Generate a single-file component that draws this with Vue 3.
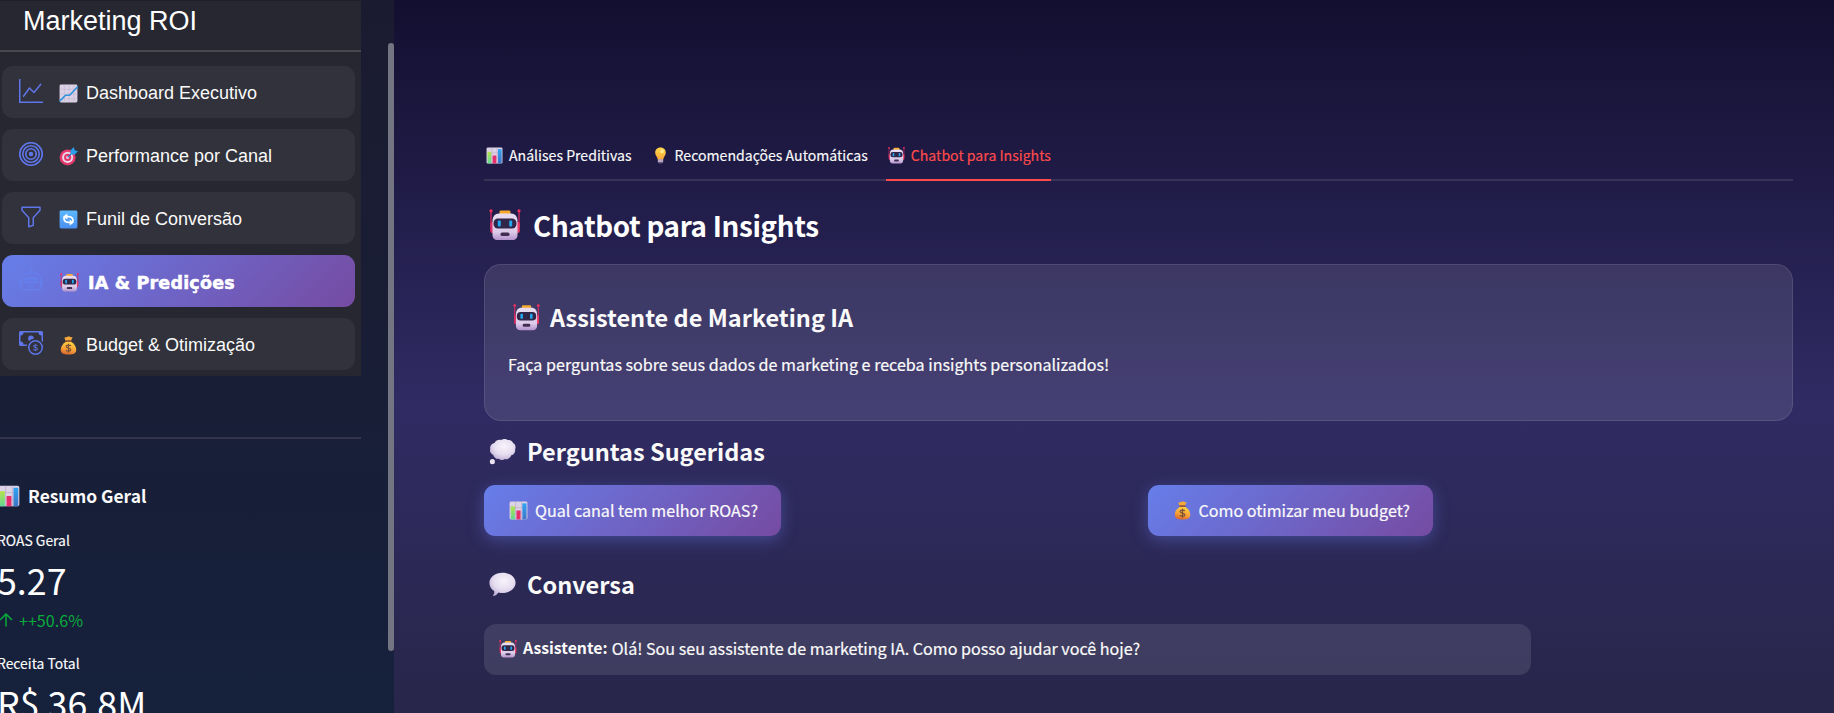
<script setup>
const menu = [
  { icon: 'graph', emoji: 'trend', label: 'Dashboard Executivo' },
  { icon: 'bullseye', emoji: 'dart', label: 'Performance por Canal' },
  { icon: 'funnel', emoji: 'cycle', label: 'Funil de Conversão' },
  { icon: 'robot', emoji: 'bot', label: 'IA & Predições', active: true },
  { icon: 'cash', emoji: 'bag', label: 'Budget & Otimização' },
]
const tabs = [
  { emoji: 'bars', label: 'Análises Preditivas' },
  { emoji: 'bulb', label: 'Recomendações Automáticas' },
  { emoji: 'bot', label: 'Chatbot para Insights', active: true },
]
</script>

<template>
  <div class="app">
    <svg class="defs" aria-hidden="true">
      <defs>
        <linearGradient id="g-head" x1="0" y1="0" x2="0" y2="1"><stop offset="0" stop-color="#e9dcf1" /><stop offset=".7" stop-color="#dccbe9" /><stop offset="1" stop-color="#b493cd" /></linearGradient>
        <linearGradient id="g-green" x1="0" y1="0" x2="0" y2="1"><stop offset="0" stop-color="#b5e34a" /><stop offset="1" stop-color="#5fd694" /></linearGradient>
        <linearGradient id="g-blue" x1="0" y1="0" x2="0" y2="1"><stop offset="0" stop-color="#2fa4f5" /><stop offset="1" stop-color="#3f74c6" /></linearGradient>
        <linearGradient id="g-bulb" x1="0" y1="0" x2="0" y2="1"><stop offset="0" stop-color="#ffd84a" /><stop offset="1" stop-color="#f9a63a" /></linearGradient>
        <linearGradient id="g-bag" x1=".7" y1="0" x2=".4" y2="1"><stop offset="0" stop-color="#ffd23e" /><stop offset=".6" stop-color="#f8a138" /><stop offset="1" stop-color="#d9692f" /></linearGradient>
        <linearGradient id="g-cyc" x1="0" y1="0" x2="0" y2="1"><stop offset="0" stop-color="#5db8ff" /><stop offset="1" stop-color="#4a8ff0" /></linearGradient>
        <radialGradient id="g-cloud" cx=".55" cy=".35" r=".65"><stop offset="0" stop-color="#f7f3fb" /><stop offset=".6" stop-color="#e6def0" /><stop offset="1" stop-color="#c3b3d8" /></radialGradient>
      </defs>
      <symbol id="i-graph" viewBox="0 0 16 16"><path d="M0 0h1v15h15v1H0V0Zm14.817 3.113a.5.5 0 0 1 .07.704l-4.5 5.5a.5.5 0 0 1-.74.037L7.06 6.767l-3.656 5.027a.5.5 0 0 1-.808-.588l4-5.5a.5.5 0 0 1 .758-.06l2.609 2.61 4.15-5.073a.5.5 0 0 1 .704-.07Z" /></symbol>
      <symbol id="i-bullseye" viewBox="0 0 16 16"><g fill="none" stroke="currentColor"><circle cx="8" cy="8" r="7.5" /><circle cx="8" cy="8" r="5.5" /><circle cx="8" cy="8" r="3.5" /></g><circle cx="8" cy="8" r="1.5" /></symbol>
      <symbol id="i-funnel" viewBox="0 0 16 16"><path d="M1.500 1.500A.5.5 0 0 1 2 1h12a.5.5 0 0 1 .5.5v2a.5.5 0 0 1-.128.334L10 8.692V13.500a.5.5 0 0 1-.342.474l-3 1A.5.5 0 0 1 6 14.500V8.692L1.628 3.834A.5.5 0 0 1 1.500 3.500v-2zm1 .5v1.308l4.372 4.858A.5.5 0 0 1 7 8.500v5.306l2-.666V8.500a.5.5 0 0 1 .128-.334L13.500 3.308V2h-11z" /></symbol>
      <symbol id="i-robot" viewBox="0 0 16 16"><path d="M6 12.500a.5.5 0 0 1 .5-.5h3a.5.5 0 0 1 0 1h-3a.5.5 0 0 1-.5-.5ZM3 8.062C3 6.760 4.235 5.765 5.530 5.886a26.580 26.580 0 0 0 4.940 0C11.765 5.765 13 6.760 13 8.062v1.157a.933.933 0 0 1-.765.935c-.845.147-2.340.346-4.235.346-1.895 0-3.390-.2-4.235-.346A.933.933 0 0 1 3 9.219V8.062Zm4.542-.827a.25.25 0 0 0-.217.068l-.92.9a24.767 24.767 0 0 1-1.871-.183.25.25 0 0 0-.068.495c.55.076 1.232.149 2.020.193a.25.25 0 0 0 .189-.071l.754-.736.847 1.710a.25.25 0 0 0 .404.062l.932-.97a25.286 25.286 0 0 0 1.922-.188.25.25 0 0 0-.068-.495c-.538.074-1.207.145-1.980.189a.25.25 0 0 0-.166.076l-.754.785-.842-1.700a.25.25 0 0 0-.182-.135Z" /><path d="M8.500 1.866a1 1 0 1 0-1 0V3h-2A4.500 4.500 0 0 0 1 7.500V8a1 1 0 0 0-1 1v2a1 1 0 0 0 1 1v1a2 2 0 0 0 2 2h10a2 2 0 0 0 2-2v-1a1 1 0 0 0 1-1V9a1 1 0 0 0-1-1v-.5A4.500 4.500 0 0 0 10.500 3h-2V1.866ZM14 7.500V13a1 1 0 0 1-1 1H3a1 1 0 0 1-1-1V7.500A3.500 3.500 0 0 1 5.500 4h5A3.500 3.500 0 0 1 14 7.500Z" /></symbol>
      <symbol id="i-cash" viewBox="0 0 16 16"><path fill-rule="evenodd" d="M11 15a4 4 0 1 0 0-8 4 4 0 0 0 0 8zm5-4a5 5 0 1 1-10 0 5 5 0 0 1 10 0z" /><path d="M9.438 11.944c.047.596.518 1.060 1.363 1.116v.44h.375v-.443c.875-.061 1.386-.529 1.386-1.207 0-.618-.39-.936-1.090-1.100l-.296-.07v-1.200c.376.043.614.248.671.532h.658c-.047-.575-.54-1.024-1.329-1.073V8.500h-.375v.45c-.747.073-1.255.522-1.255 1.158 0 .562.378.92 1.007 1.066l.248.061v1.272c-.384-.058-.639-.27-.696-.563h-.668zm1.360-1.354c-.369-.085-.569-.26-.569-.522 0-.294.216-.514.572-.578v1.100h-.003zm.432.746c.449.104.655.272.655.569 0 .339-.257.571-.709.614v-1.195l.054.012z" /><path d="M1 0a1 1 0 0 0-1 1v8a1 1 0 0 0 1 1h4.083c.058-.344.145-.678.258-1H3a2 2 0 0 0-2-2V3a2 2 0 0 0 2-2h10a2 2 0 0 0 2 2v3.528c.38.34.717.728 1 1.154V1a1 1 0 0 0-1-1H1z" /><path d="M9.998 5.083 10 5a2 2 0 1 0-3.132 1.650 5.982 5.982 0 0 1 3.130-1.567z" /></symbol>

      <symbol id="e-bot" viewBox="0 0 32 32">
        <path d="M2 2v16M30 2v16" stroke="#d42a60" stroke-width="1.300" /><circle cx="2" cy="1.800" r="1.600" fill="#f8305f" /><circle cx="30" cy="1.800" r="1.600" fill="#f8305f" />
        <rect x="1.200" y="13" width="5" height="11" rx="2" fill="#d92e66" /><rect x="25.800" y="13" width="5" height="11" rx="2" fill="#ef3a68" />
        <rect x="10.500" y="1.600" width="11" height="4.500" rx="1.300" fill="#f5a92d" />
        <path d="M10 4.500h12c4 0 6.500 3 6.500 7.500v14c0 3-2 5-5 5h-15c-3 0-5-2-5-5V12c0-4.500 2.500-7.500 6.500-7.500z" fill="url(#g-head)" />
        <rect x="4.500" y="9.500" width="23" height="10" rx="4.500" fill="#322649" />
        <rect x="8.800" y="11.500" width="3" height="6" rx="1" fill="#23a8ef" /><rect x="20.200" y="11.500" width="3" height="6" rx="1" fill="#23a8ef" />
        <rect x="11.500" y="23.500" width="9" height="3.600" rx="1.600" fill="#402f50" />
      </symbol>
      <symbol id="e-bars" viewBox="0 0 32 32"><rect x="1" y="1" width="30" height="30" rx="2.500" fill="#dcd2e5" /><path d="M1 11h30M1 21h30M11 1v30M21 1v30" stroke="#b9a9c9" stroke-width="1" /><path d="M3 9h7v22H3z" fill="url(#g-green)" /><path d="M12.500 16h7v15h-7z" fill="#e62e6c" /><path d="M22.500 4h7v27h-7z" fill="url(#g-blue)" /></symbol>
      <symbol id="e-trend" viewBox="0 0 32 32"><rect x="1" y="1" width="30" height="30" rx="2.500" fill="#dcd2e5" /><path d="M1 9h30M1 17h30M1 25h30M9 1v30M17 1v30M25 1v30" stroke="#c3b4d0" stroke-width="1" /><path d="M2 28l9-9h7L31 5" fill="none" stroke="#2f92dc" stroke-width="2.800" stroke-linejoin="round" stroke-linecap="round" /></symbol>
      <symbol id="e-dart" viewBox="0 0 32 32"><circle cx="14.500" cy="17.500" r="13.500" fill="#e5396b" /><circle cx="14.500" cy="17.500" r="9.300" fill="#ead8ec" /><circle cx="14.500" cy="17.500" r="6" fill="#e5396b" /><circle cx="14.500" cy="17.500" r="2.500" fill="#ead8ec" /><path d="M14.500 17.500L24 8" stroke="#2878be" stroke-width="2" /><path d="M20 12l-.8-6L25 0l1.500 5.500L32 7l-6 6z" fill="#2b9deb" /></symbol>
      <symbol id="e-cycle" viewBox="0 0 32 32"><rect x="1" y="1" width="30" height="30" rx="2.500" fill="url(#g-cyc)" /><g fill="none" stroke="#fff" stroke-width="3"><path d="M23 21c2-6-1-10-7-10h-3" /><path d="M9 11c-2 6 1 10 7 10h3" /></g><path d="M14 6v10l-7-5zM18 16v10l7-5z" fill="#fff" /></symbol>
      <symbol id="e-bag" viewBox="0 0 32 32"><path d="M11 8L9 3c3-2 4 0 6-2 3-1 4 1 8 1l-3 6z" fill="#f7a83a" /><path d="M11 7h10v3H11z" fill="#9a5a35" /><path d="M11 10h10c5 3 8 8 8 13 0 6-4 8-13 8S3 29 3 23c0-5 3-10 8-13z" fill="url(#g-bag)" /><path d="M16 13v15M20 17c-1-2-8-2.500-8 .6 0 3.500 8 2 8 5.700 0 3-7 3-8.300.2" fill="none" stroke="#79523a" stroke-width="2" /></symbol>
      <symbol id="e-bulb" viewBox="0 0 32 32"><path d="M16 1c6.500 0 10 4.500 10 10 0 5-4 7-5 13H11C10 18 6 16 6 11 6 5.500 9.500 1 16 1z" fill="url(#g-bulb)" /><ellipse cx="19" cy="8" rx="3.500" ry="4" fill="#ffe98a" /><rect x="11" y="23" width="10" height="6" rx="1" fill="#b9a7c4" /><path d="M12.500 29h7l-1.500 2.500h-4z" fill="#5d4b68" /></symbol>
      <symbol id="e-thought" viewBox="0 0 32 32"><path d="M6.500 6C8 2.500 12 1.500 14.500 2.500c2-1.800 6-1.500 7.500 0 3-.8 6 1 6.500 3.500 3 1.500 3.500 5 2.500 7 .5 4-1.500 7-4.500 7.500-1.500 3.800-5 5.500-7.500 4.500-2.500 1.800-5.500 1.500-7.500-.3-3 .5-5.500-1.700-6.500-4.700-3-1-4.500-4.500-3.500-7C.5 9.500 3.500 6.300 6.500 6z" fill="url(#g-cloud)" /><circle cx="4" cy="28" r="3" fill="#eae3f2" /></symbol>
      <symbol id="e-speech" viewBox="0 0 32 32"><path d="M16 2c9 0 15.500 5.500 15.500 12S25 26 16 26c-2 0-3.500-.2-5-.6-1 2.200-3 3.700-5.500 4.100-.6 0-.8-.5-.4-1 1-1.500 1.400-3 1-4.800C2.500 21.500.5 18.300.5 14 .500 7.500 7 2 16 2z" fill="url(#g-cloud)" /></symbol>
    </svg>

    <aside class="sidebar">
      <nav class="menu">
        <div class="brand">Marketing ROI</div>
        <ul>
          <li v-for="m in menu" :key="m.label" :class="{ active: m.active }">
            <svg class="icon"><use :href="'#i-' + m.icon" /></svg>
            <svg class="emo"><use :href="'#e-' + m.emoji" /></svg>
            <span>{{ m.label }}</span>
          </li>
        </ul>
      </nav>
      <div class="rule"></div>
      <section class="summary">
        <h4><svg><use href="#e-bars" /></svg><span>Resumo Geral</span></h4>
        <div class="lbl">ROAS Geral</div>
        <div class="val">5.27</div>
        <div class="delta">
          <svg viewBox="0 0 14 14"><path d="M7 13.500V1M1 7l6-6 6 6" fill="none" stroke="currentColor" stroke-width="1.500" /></svg>
          <span>++50.6%</span>
        </div>
        <div class="lbl second">Receita Total</div>
        <div class="val">R$ 36.8M</div>
      </section>
      <div class="thumb"></div>
    </aside>

    <main>
      <div class="tabs">
        <div v-for="t in tabs" :key="t.label" class="tab" :class="{ active: t.active }">
          <svg><use :href="'#e-' + t.emoji" /></svg><span>{{ t.label }}</span>
        </div>
      </div>
      <h2><svg><use href="#e-bot" /></svg><span>Chatbot para Insights</span></h2>
      <section class="card">
        <h3><svg><use href="#e-bot" /></svg><span>Assistente de Marketing IA</span></h3>
        <p>Faça perguntas sobre seus dados de marketing e receba insights personalizados!</p>
      </section>
      <h3 class="ask"><svg><use href="#e-thought" /></svg><span>Perguntas Sugeridas</span></h3>
      <div class="actions">
        <div><button><svg><use href="#e-bars" /></svg><span>Qual canal tem melhor ROAS?</span></button></div>
        <div><button><svg><use href="#e-bag" /></svg><span>Como otimizar meu budget?</span></button></div>
      </div>
      <h3 class="talk"><svg><use href="#e-speech" /></svg><span>Conversa</span></h3>
      <div class="msg"><svg><use href="#e-bot" /></svg><b>Assistente:</b><span>Olá! Sou seu assistente de marketing IA. Como posso ajudar você hoje?</span></div>
    </main>
  </div>
</template>

<style>
html, body { margin: 0; height: 713px; overflow: hidden; }
</style>

<style scoped>
* { box-sizing: border-box; }
.app { display: flex; width: 1834px; height: 713px; overflow: hidden; color: #fafafa; font-family: "Noto Sans CJK SC", "Noto Sans", sans-serif; font-size: 16.1px; white-space: nowrap; }
.defs { position: absolute; width: 0; height: 0; }
svg { flex: none; display: block; }
h2, h3, h4, p, ul { margin: 0; padding: 0; list-style: none; }

.sidebar { position: relative; width: 394px; height: 713px; flex: none; overflow: hidden; background: linear-gradient(180deg, #1b1b30 0, #16213c 100%); }
.thumb { position: absolute; right: 0; top: 43px; width: 6px; height: 608px; border-radius: 3px; background: #747582; }
.menu { width: 361px; height: 376px; background: #262730; font-family: "Liberation Sans", Arial, sans-serif; border-top: 1px solid #20202c; }
.brand { height: 51px; padding-left: 23px; line-height: 40px; font-size: 27px; color: #fff; border-bottom: 2px solid #46474f; }
.menu ul { padding: 14px 6px 0 2px; display: flex; flex-direction: column; gap: 11px; }
.menu li { height: 52px; border-radius: 11px; background: #31323b; display: flex; align-items: center; padding-left: 17px; color: #fafafa; font-size: 18px; }
.icon { width: 24px; height: 24px; margin-top: -3px; fill: #5f75ea; color: #5f75ea; stroke-width: 1.1; }
.active .icon { fill: #667eea; }
.emo { width: 19px; height: 19px; margin: 2px 8px 0 16px; }
.menu li span { line-height: 24px; margin-top: 1px; }
.menu li.active { background: linear-gradient(135deg, #667eea 0%, #764ba2 100%); }
.active .emo { margin-left: 17px; margin-right: 9px; }
.menu li.active span { font-family: "DejaVu Sans", "Liberation Sans", sans-serif; font-weight: 700; font-size: 17.5px; letter-spacing: .2px; margin-top: 3px; color: #fff; -webkit-text-stroke: .5px #fff; }

.rule { width: 361px; height: 2px; margin-top: 61px; background: #33354f; }
.summary { padding-top: 43px; margin-left: -3px; }
h4 { display: flex; align-items: center; height: 28px; font-size: 17.4px; font-weight: 700; line-height: 28px; }
h4 svg { width: 22px; height: 22px; margin: 0 8px 0 1px; }
.lbl { height: 22px; line-height: 22px; font-size: 13.9px; margin-top: 19px; -webkit-text-stroke: .15px; }
.val { height: 48px; line-height: 48px; font-size: 35.8px; color: #fff; margin-top: 4px; }
.delta { display: flex; align-items: center; height: 26px; line-height: 26px; color: #09ab3b; margin-top: 4px; }
.delta svg { width: 14px; height: 14px; margin: 0 6px 0 2px; }
.lbl.second { margin-top: 19px; }

main { flex: 1; height: 713px; padding: 140px 41px 0 90px; background: linear-gradient(180deg, #130f30 0, #302b63 405px, #28264a 713px); }
.tabs { display: flex; height: 41px; border-bottom: 2px solid #383257; }
.tab { display: flex; align-items: center; height: 41px; padding-bottom: 9px; font-size: 14.1px; line-height: 30px; border-bottom: 2px solid transparent; margin-right: 18px; -webkit-text-stroke: .15px; }
.tab svg { width: 17px; height: 17px; margin: 0 6px 0 2px; }
.tab.active { color: #ff4b4b; border-color: #ff4b4b; }
h2 { display: flex; align-items: center; height: 40px; line-height: 40px; margin-top: 24px; font-size: 27.8px; letter-spacing: -.34px; color: #fff; }
h2 svg { width: 32px; height: 32px; margin: 0 12px 0 5px; }
.card { height: 157px; margin-top: 19px; padding: 36px 24px 0 23px; border: 1px solid rgba(255,255,255,.1); border-radius: 17px; background: rgba(255,255,255,.1); }
h3 { display: flex; align-items: center; height: 32px; line-height: 32px; font-size: 23.5px; }
h3 svg { width: 27px; height: 27px; margin: 0 10px 0 5px; }
.card p { height: 28px; line-height: 28px; margin-top: 17px; -webkit-text-stroke: .2px; }
.ask { margin-top: 14px; }
.ask svg, .talk svg { margin-right: 11px; }
.actions { display: grid; grid-template-columns: 1fr 1fr; column-gap: 18px; margin-top: 18px; }
button { display: flex; align-items: center; height: 51px; border: 0; padding: 0 23px 2px 25px; border-radius: 11px; background: linear-gradient(135deg, #667eea 0%, #764ba2 100%); box-shadow: 0 4px 16px rgba(102,126,234,.4); color: #fafafa; font: inherit; -webkit-text-stroke: .2px; }
button svg { width: 19px; height: 19px; margin: 1px 7px 0 0; }
button span { line-height: 24px; }
.talk { margin-top: 32px; }
.msg { width: 1047px; height: 51px; margin-top: 24px; display: flex; align-items: center; padding: 0 0 3px 15px; border-radius: 12px; background: rgba(255,255,255,.1); line-height: 24px; }
.msg svg { width: 18px; height: 18px; margin: 1px 6px 0 0; }
.msg b { margin-right: 4px; font-size: 15.8px; }
.msg span { font-size: 16.1px; -webkit-text-stroke: .2px; }
</style>
